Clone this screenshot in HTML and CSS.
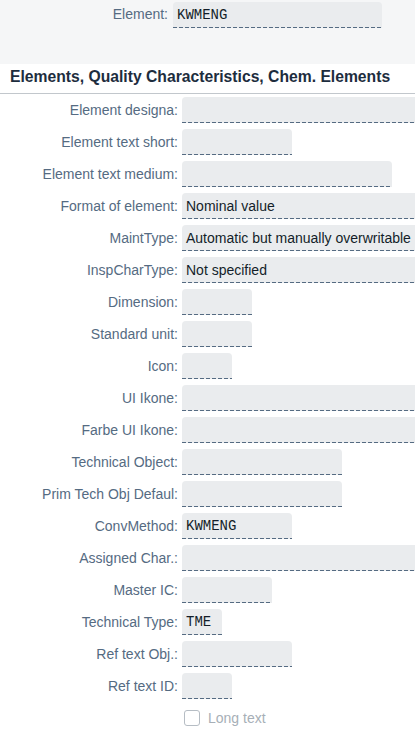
FILE: index.html
```html
<!DOCTYPE html>
<html>
<head>
<meta charset="utf-8">
<link rel="stylesheet" href="styles.css">
</head>
<body>
<div class="header">
  <div class="head-row">
    <span class="head-label">Element:</span>
    <div class="field head-field mono">KWMENG</div>
  </div>
</div>
<div class="title">Elements, Quality Characteristics, Chem. Elements</div>
<div class="form">
  <span class="label">Element designa:</span><div class="field w-full"></div>
  <span class="label">Element text short:</span><div class="field w-110"></div>
  <span class="label">Element text medium:</span><div class="field w-210"></div>
  <span class="label">Format of element:</span><div class="field w-full">Nominal value</div>
  <span class="label">MaintType:</span><div class="field w-full">Automatic but manually overwritable</div>
  <span class="label">InspCharType:</span><div class="field w-full">Not specified</div>
  <span class="label">Dimension:</span><div class="field w-70"></div>
  <span class="label">Standard unit:</span><div class="field w-70"></div>
  <span class="label">Icon:</span><div class="field w-50"></div>
  <span class="label">UI Ikone:</span><div class="field w-full"></div>
  <span class="label">Farbe UI Ikone:</span><div class="field w-full"></div>
  <span class="label">Technical Object:</span><div class="field w-160"></div>
  <span class="label">Prim Tech Obj Defaul:</span><div class="field w-160"></div>
  <span class="label">ConvMethod:</span><div class="field w-110 mono">KWMENG</div>
  <span class="label">Assigned Char.:</span><div class="field w-full"></div>
  <span class="label">Master IC:</span><div class="field w-90"></div>
  <span class="label">Technical Type:</span><div class="field w-40 mono">TME</div>
  <span class="label">Ref text Obj.:</span><div class="field w-110"></div>
  <span class="label">Ref text ID:</span><div class="field w-50"></div>
  <span class="label"></span>
  <div class="check"><span class="box"></span><span class="check-text">Long text</span></div>
</div>
</body>
</html>
```
FILE: styles.css
```css
html, body {
  margin: 0;
  padding: 0;
  background: #ffffff;
  font-family: "Liberation Sans", Arial, sans-serif;
  font-size: 14px;
  overflow: hidden;
}
.header {
  background: #f5f6f7;
  height: 64px;
  padding-top: 1px;
  box-sizing: border-box;
}
.head-row {
  display: flex;
  align-items: center;
  gap: 5px;
}
.head-label {
  width: 168px;
  text-align: right;
  color: #556b82;
  line-height: 27px;
}
.head-field {
  width: 209px;
  flex: none;
}
.title {
  height: 29px;
  line-height: 25px;
  padding-left: 10px;
  font-weight: bold;
  font-size: 15.7px;
  color: #1d2d3e;
  border-bottom: 1px solid #c2c7cc;
  white-space: nowrap;
}
.form {
  display: grid;
  grid-template-columns: 178px 1fr;
  column-gap: 4px;
  row-gap: 6px;
  grid-auto-rows: 26px;
  padding-top: 3px;
}
.label {
  text-align: right;
  color: #556b82;
  line-height: 27px;
  white-space: nowrap;
}
.field {
  box-sizing: border-box;
  height: 26px;
  line-height: 27px;
  padding-left: 4px;
  color: #131e29;
  border-radius: 4px 4px 0 0;
  background-color: #eaecee;
  background-image: linear-gradient(90deg, #556b82 0 4px, transparent 4px 6px);
  background-size: 6px 1px;
  background-repeat: repeat-x;
  background-position: 0 100%;
  white-space: nowrap;
  overflow: hidden;
}
.mono {
  font-family: "Liberation Mono", "DejaVu Sans Mono", monospace;
  font-size: 14px;
}
.w-full { width: 100%; border-radius: 4px 0 0 0; }
.w-110 { width: 110px; }
.w-210 { width: 210px; }
.w-160 { width: 160px; }
.w-90 { width: 90px; }
.w-70 { width: 70px; }
.w-50 { width: 50px; }
.w-40 { width: 40px; }
.check {
  display: flex;
  align-items: center;
  gap: 8px;
  padding-left: 2px;
}
.box {
  width: 14px;
  height: 14px;
  border: 1px solid #b6bdc4;
  border-radius: 3px;
  background: #ffffff;
}
.check-text {
  color: #a7afb7;
}
```
